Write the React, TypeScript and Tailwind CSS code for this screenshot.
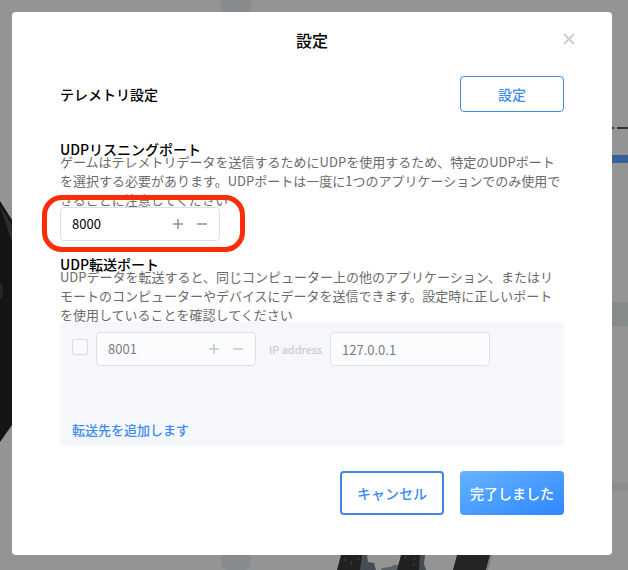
import type { ReactNode } from 'react';

function Stepper({ id, value, disabled = false }: { id: string; value: number; disabled?: boolean }) {
  return (
    <div
      className={`flex h-[34px] w-40 items-center rounded border pr-[5px] pl-[11px] ${
        disabled ? 'border-[#dfe1e4] bg-[#fafcfd] text-[#7d7d7d]' : 'border-[#dcdfea] bg-white text-black'
      }`}
    >
      <input id={id} type="text" inputMode="numeric" defaultValue={value} disabled={disabled} className="min-w-0 flex-1 bg-transparent text-[13px]" />
      <button type="button" aria-label="+" disabled={disabled} className="flex size-6 items-center justify-center">
        <PlusMinus plus disabled={disabled} />
      </button>
      <button type="button" aria-label="−" disabled={disabled} className="flex size-6 items-center justify-center">
        <PlusMinus disabled={disabled} />
      </button>
    </div>
  );
}

function PlusMinus({ plus = false, disabled = false }: { plus?: boolean; disabled?: boolean }) {
  return (
    <svg viewBox="0 0 10 10" className="size-[10px]" stroke={disabled ? '#c4c6c8' : '#8f8f8f'} strokeWidth="1.5" aria-hidden="true">
      <path d={plus ? 'M0 5h10M5 0v10' : 'M0 5h10'} />
    </svg>
  );
}

function Section({ title, text, htmlFor, children }: { title: string; text: string; htmlFor: string; children: ReactNode }) {
  return (
    <section>
      <h2 className="h-[11px] text-sm leading-4 font-medium text-black">
        <label htmlFor={htmlFor}>{title}</label>
      </h2>
      <p className="h-[55px] overflow-hidden text-[13px] leading-[19px] text-[#6b6b6b]">{text}</p>
      {children}
    </section>
  );
}

function Backdrop() {
  return (
    <div className="absolute inset-0 flex overflow-hidden bg-[#949494]" aria-hidden="true">
      <div className="relative w-[221px] shrink-0">
        <svg viewBox="0 0 60 280" className="absolute top-[180px] left-0 h-[280px] w-[60px]">
          <path d="M0 21 12 40 30 90V190L12 245 0 262Z" fill="#141414" />
          <path d="M0 26 12 45V62Z" fill="#2e2e2e" />
          <path d="M0 103c3 4 3 11 0 16" fill="#222" stroke="#333" />
        </svg>
      </div>
      <div className="w-[30px] shrink-0 rounded-b-lg bg-[#888b8d]" />
      <div className="relative flex flex-1 flex-col">
        <div className="flex h-[302px] flex-col items-end justify-end pb-[139px]">
          <svg viewBox="0 0 16 2" className="mb-[26px] h-[2px] w-4" fill="#333">
            <path d="M0 0h2v2H0ZM5 0h11v2H5Z" />
          </svg>
          <div className="h-2 w-10 bg-[#34609b]" />
        </div>
        <div className="h-6 bg-[#858a8b]" />
        <div className="h-[157px]" />
        <div className="h-[7px] bg-[#8b8e8f]" />
        <svg viewBox="0 0 160 15" className="absolute bottom-0 left-[83px] h-[15px] w-40">
          <path d="M7 0h22l4 15H3Z" fill="#202123" />
          <path d="M28 0h5l1 7 6 1 2 7H26Z" fill="#454c53" />
          <path d="M48 13l8-1 4-2h5l1 5H47Z" fill="#5b6269" />
          <path d="M67 0h20l1 15H63Z" fill="#202123" />
          <path d="M86 0h5l-1 9 2 6h-7Z" fill="#454c53" />
          <path d="M123 0h33l-4 15h-33Z" fill="#232425" />
          <path d="M156 0h2l-4 15h-2Z" fill="#777" />
          <path d="M11 5h1M24 4h1M17 8h1M71 2h1M80 4h1M79 10h1" stroke="#777" />
        </svg>
      </div>
    </div>
  );
}

export default function App() {
  return (
    <div lang="ja" className="relative min-h-screen pt-3 pr-4 pb-[15px] pl-3 font-['Noto_Sans_CJK_JP',sans-serif]">
      <Backdrop />
      <div role="dialog" aria-modal="true" aria-labelledby="dialog-title" className="relative rounded bg-white px-12 pb-10">
        <header className="flex h-14 items-center justify-center">
          <h1 id="dialog-title" className="text-base font-medium text-black">設定</h1>
          <button type="button" aria-label="×" className="absolute top-5 right-9 p-px text-[#cfcfcf]">
            <svg viewBox="0 0 12 12" className="size-3" stroke="currentColor" strokeWidth="2" aria-hidden="true">
              <path d="M1 1l10 10M11 1 1 11" />
            </svg>
          </button>
        </header>

        <div className="mt-2 flex items-center justify-between">
          <h2 className="text-sm font-medium text-black">テレメトリ設定</h2>
          <button type="button" className="h-9 w-[104px] rounded border border-[#4088e6] text-sm font-medium text-[#3d8bf0]">
            設定
          </button>
        </div>

        <div className="mt-[29px] flex flex-col gap-[15px]">
          <Section
            title="UDPリスニングポート"
            htmlFor="listen-port"
            text="ゲームはテレメトリデータを送信するためにUDPを使用するため、特定のUDPポートを選択する必要があります。UDPポートは一度に1つのアプリケーションでのみ使用できることに注意してください"
          >
            <div className="relative w-40">
              <Stepper id="listen-port" value={8000} />
              <div className="pointer-events-none absolute -top-3 -right-[25px] -bottom-[11px] -left-[18px] rounded-[20px] border-5 border-[#fb2c08]" />
            </div>
          </Section>

          <Section
            title="UDP転送ポート"
            htmlFor="forward-port"
            text="UDPデータを転送すると、同じコンピューター上の他のアプリケーション、またはリモートのコンピューターやデバイスにデータを送信できます。設定時に正しいポートを使用していることを確認してください"
          >
            <div className="bg-[#f5f7fb] px-3 pt-[10px] pb-1">
              <div className="flex h-[88px] items-start">
                <input
                  type="checkbox"
                  aria-label="UDP転送ポート"
                  disabled
                  className="mt-[7px] mr-2 size-4 appearance-none rounded-xs border border-[#d9dbde] bg-[#f9fafc]"
                />
                <Stepper id="forward-port" value={8001} disabled />
                <label htmlFor="ip-address" className="mr-2 ml-[13px] text-[11px] leading-[34px] text-[#c3c5c8]">IP address</label>
                <input
                  id="ip-address"
                  type="text"
                  defaultValue="127.0.0.1"
                  disabled
                  className="h-[34px] w-40 rounded border border-[#dfe1e4] bg-[#fafcfd] px-[11px] text-[13px] text-[#7d7d7d]"
                />
              </div>
              <button type="button" className="mb-[2px] block text-[13px] leading-5 font-medium text-[#3d8bf0]">
                転送先を追加します
              </button>
            </div>
          </Section>
        </div>

        <footer className="mt-[25px] flex justify-end gap-4">
          <button type="button" className="h-11 w-[104px] rounded border-2 border-[#3f87e0] text-sm font-medium text-[#3d8bf0]">
            キャンセル
          </button>
          <button type="button" className="h-11 w-[104px] rounded bg-linear-to-br from-[#66b3ff] to-[#2f86ff] text-sm font-medium text-white">
            完了しました
          </button>
        </footer>
      </div>
    </div>
  );
}
